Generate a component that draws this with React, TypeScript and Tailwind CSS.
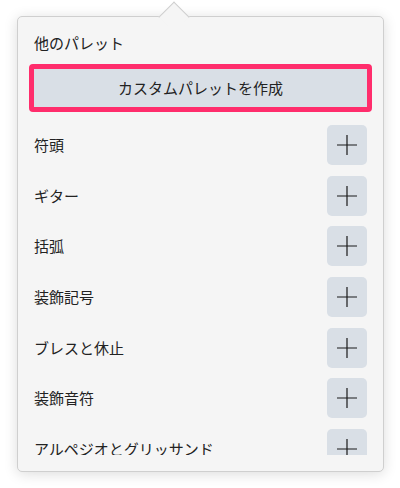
import React from 'react';

const palettes = ['符頭', 'ギター', '括弧', '装飾記号', 'ブレスと休止', '装飾音符', 'アルペジオとグリッサンド'];

const PlusIcon: React.FC = () => (
  <svg width="20" height="20" viewBox="0 0 20 20" fill="none" stroke="#1a1a1a" strokeWidth="1.2">
    <path d="M0 10h20M10 0v20" />
  </svg>
);

const PaletteRow: React.FC<{ label: string }> = ({ label }) => (
  <div className="flex items-center justify-between h-[40px] shrink-0">
    <span className="text-[15px] leading-[20px] text-[#222]">{label}</span>
    <button className="w-[40px] h-[40px] rounded-[5px] bg-[#d9dfe6] flex items-center justify-center">
      <PlusIcon />
    </button>
  </div>
);

export default function App() {
  return (
    <div
      className="w-[400px] h-[488px] bg-white pt-[16px] pl-[17px]"
      style={{ fontFamily: '"Noto Sans CJK JP", "Noto Sans", sans-serif' }}
    >
      <div className="relative w-[367px] h-[456px] bg-[#f5f5f5] border border-[#cfcfcf] rounded-[5px] shadow-[0_2px_14px_rgba(0,0,0,0.14)] flex flex-col px-[16px] pt-[16px] pb-[16px]">
        {/* popover arrow */}
        <div className="absolute left-[145px] top-[-11px] w-[22px] h-[22px] rotate-45 bg-[#f5f5f5] border-t border-l border-[#cfcfcf]" />

        <div className="relative text-[15px] leading-[20px] text-[#222]">他のパレット</div>

        <button className="relative -mx-[5px] mt-[11px] h-[48px] shrink-0 border-[5px] border-[#ff2d6c] rounded-[4px] bg-[#d9dfe6] text-[15px] text-[#222] flex items-center justify-center">
          カスタムパレットを作成
        </button>

        <div className="mt-[13px] flex-1 min-h-0 overflow-hidden flex flex-col gap-[10.7px]">
          {palettes.map((p) => (
            <PaletteRow key={p} label={p} />
          ))}
        </div>
      </div>
    </div>
  );
}
